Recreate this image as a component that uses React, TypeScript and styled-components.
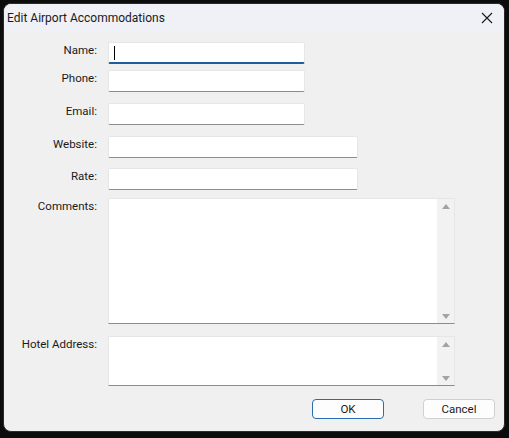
import React from 'react';
import styled, { createGlobalStyle } from 'styled-components';

const GlobalStyle = createGlobalStyle`
  html, body {
    margin: 0;
    padding: 0;
    background: #0c0c0c;
  }
  body {
    width: 509px;
    height: 438px;
    overflow: hidden;
    font-family: Roboto, 'Noto Sans', sans-serif;
  }
`;

const Window = styled.div`
  margin: 3px 0 0 3px;
  width: 502px;
  height: 429px;
  border-radius: 8px;
  background: #f0f0f0;
  border: 1px solid #2b2b2b;
  box-sizing: border-box;
  overflow: hidden;
  display: flex;
  flex-direction: column;
`;

const TitleBar = styled.div`
  height: 28px;
  flex: none;
  background: #eff1f7;
  display: flex;
  align-items: center;
  justify-content: space-between;
  padding: 0 10px 0 3px;
  font-size: 12px;
  color: #1a1a1a;
`;

const CloseButton = styled.div`
  width: 14px;
  height: 14px;
  display: flex;
  align-items: center;
  justify-content: center;
`;

const Form = styled.div`
  display: flex;
  flex-direction: column;
  padding-top: 10px;
`;

const Row = styled.div<{ $gap: number }>`
  display: grid;
  grid-template-columns: 93px auto;
  column-gap: 11px;
  margin-top: ${(p) => p.$gap}px;
`;

const Label = styled.label`
  text-align: right;
  font-size: 11.5px;
  line-height: 15px;
  padding-top: 1px;
  color: #1a1a1a;
`;

const Input = styled.div<{ $width: number; $focused?: boolean }>`
  width: ${(p) => p.$width}px;
  height: 22px;
  box-sizing: border-box;
  background: #ffffff;
  border: 1px solid #e6e6e6;
  border-bottom: ${(p) => (p.$focused ? '2px solid #1f5f99' : '1px solid #8c8c8c')};
  border-radius: 2px;
  position: relative;
`;

const Caret = styled.span`
  position: absolute;
  left: 5px;
  top: 3px;
  width: 1px;
  height: 14px;
  background: #000;
`;

const TextArea = styled.div<{ $height: number }>`
  width: 347px;
  height: ${(p) => p.$height}px;
  box-sizing: border-box;
  background: #ffffff;
  border: 1px solid #e6e6e6;
  border-bottom: 1px solid #8c8c8c;
  display: flex;
  justify-content: flex-end;
`;

const ScrollBar = styled.div`
  width: 17px;
  background: #f2f2f2;
  display: flex;
  flex-direction: column;
  justify-content: space-between;
  align-items: center;
  padding: 5px 0 4px;
`;

const Arrow = styled.div<{ $up?: boolean }>`
  width: 0;
  height: 0;
  border-left: 4px solid transparent;
  border-right: 4px solid transparent;
  ${(p) => (p.$up ? 'border-bottom: 5px solid #a3a3a3;' : 'border-top: 5px solid #a3a3a3;')}
`;

const ButtonRow = styled.div`
  display: flex;
  justify-content: flex-end;
  gap: 39px;
  padding-right: 9px;
  margin-top: 13px;
`;

const Button = styled.button<{ $primary?: boolean }>`
  width: 72px;
  height: 20px;
  box-sizing: border-box;
  border-radius: 4px;
  background: #fdfdfd;
  border: 1px solid ${(p) => (p.$primary ? '#2a6cb0' : '#d0d0d0')};
  font-family: inherit;
  font-size: 11.5px;
  color: #1a1a1a;
  padding: 0;
`;

const Scroller = () => (
  <ScrollBar>
    <Arrow $up />
    <Arrow />
  </ScrollBar>
);

export default function App() {
  return (
    <>
      <GlobalStyle />
      <Window>
        <TitleBar>
          <span>Edit Airport Accommodations</span>
          <CloseButton>
            <svg width="12" height="12" viewBox="0 0 12 12">
              <path d="M1 1 L11 11 M11 1 L1 11" stroke="#1a1a1a" strokeWidth="1.1" />
            </svg>
          </CloseButton>
        </TitleBar>
        <Form>
          <Row $gap={0}>
            <Label>Name:</Label>
            <Input $width={197} $focused>
              <Caret />
            </Input>
          </Row>
          <Row $gap={6}>
            <Label>Phone:</Label>
            <Input $width={197} />
          </Row>
          <Row $gap={11}>
            <Label>Email:</Label>
            <Input $width={197} />
          </Row>
          <Row $gap={11}>
            <Label>Website:</Label>
            <Input $width={250} />
          </Row>
          <Row $gap={10}>
            <Label>Rate:</Label>
            <Input $width={250} />
          </Row>
          <Row $gap={8}>
            <Label>Comments:</Label>
            <TextArea $height={126}>
              <Scroller />
            </TextArea>
          </Row>
          <Row $gap={12}>
            <Label>Hotel Address:</Label>
            <TextArea $height={50}>
              <Scroller />
            </TextArea>
          </Row>
          <ButtonRow>
            <Button $primary>OK</Button>
            <Button>Cancel</Button>
          </ButtonRow>
        </Form>
      </Window>
    </>
  );
}
